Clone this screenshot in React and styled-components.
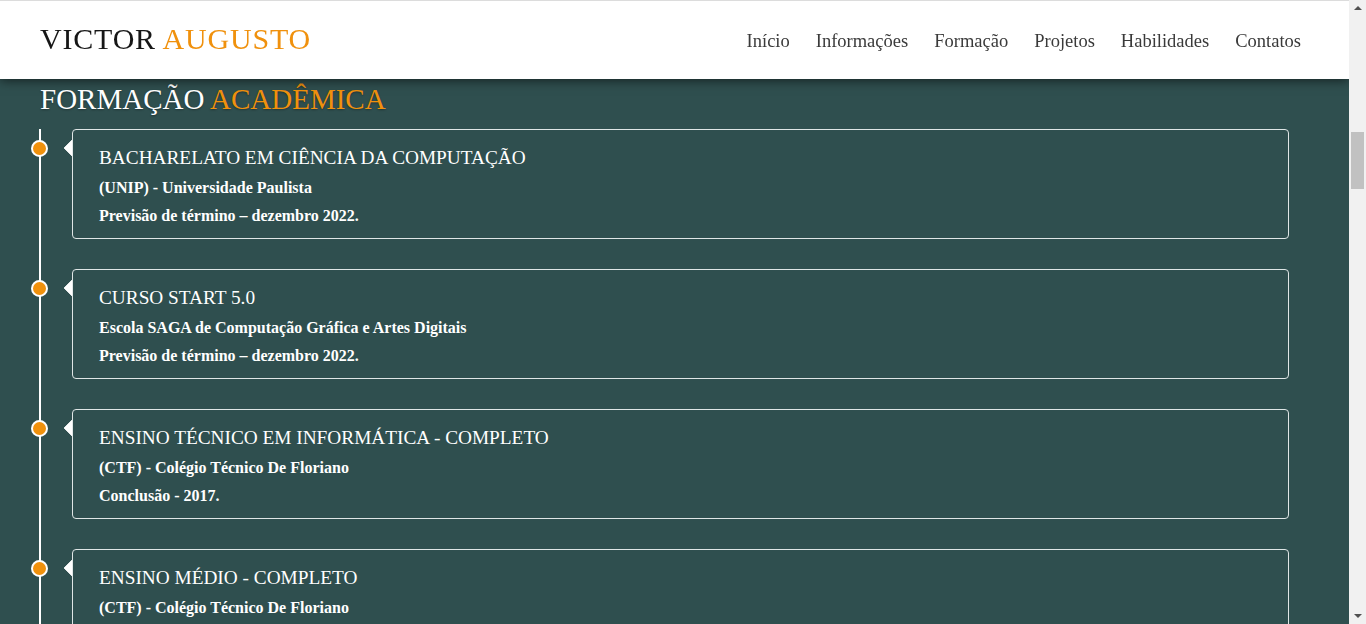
import React from 'react';
import styled, {createGlobalStyle} from 'styled-components';

const GlobalStyle = createGlobalStyle`
    body {
        margin: 0;
        background: #2f4f4f;
        font-family: "Liberation Serif", "Times New Roman", serif;
    }
`

const Header = styled.header`
    position: fixed;
    top: 0;
    left: 0;
    right: 17px;
    height: 78px;
    background: #ffffff;
    border-top: 1px solid #dcdcdc;
    box-shadow: 0 2px 10px rgba(0,0,0,0.55);
    display: flex;
    align-items: center;
    justify-content: space-between;
    padding: 0 48px 0 40px;
    z-index: 10;
`
const Logo = styled.div`
    font-size: 30px;
    letter-spacing: 0.8px;
    color: #161616;
    padding-bottom: 2px;
`
const Accent = styled.span`
    color: #f0910d;
`
const Nav = styled.nav`
    display: flex;
    gap: 26px;
    padding-top: 2px;
`
const NavLink = styled.a`
    font-size: 18.5px;
    color: #3a3a3a;
    text-decoration: none;
    cursor: pointer;
`
const ScrollBar = styled.div`
    position: fixed;
    top: 0;
    right: 0;
    bottom: 0;
    width: 17px;
    background: #f1f1f1;
    z-index: 20;
    display: flex;
    flex-direction: column;
    align-items: center;
`
const Arrow = styled.span`
    width: 0;
    height: 0;
    margin: ${p => p.$down ? 'auto 0 6px' : '6px 0 0'};
    border-left: 4px solid transparent;
    border-right: 4px solid transparent;
    ${p => p.$down ? 'border-top: 4px solid #505050;' : 'border-bottom: 4px solid #505050;'}
`
const Thumb = styled.span`
    width: 13px;
    height: 57px;
    margin-top: 122px;
    background: #c1c1c1;
`
const Main = styled.main`
    padding: 80px 77px 40px 40px;
`
const SectionTitle = styled.h2`
    margin: 3px 0 13px;
    font-size: 29px;
    font-weight: normal;
    line-height: 33px;
    color: #ffffff;
    text-shadow: 0 1px 2px rgba(0,0,0,0.35);
`
const Timeline = styled.div`
    border-left: 2px solid #ffffff;
    margin-left: -1px;
    padding-left: 31px;
`
const Item = styled.div`
    position: relative;
    margin-bottom: 30px;
`
const Dot = styled.span`
    position: absolute;
    left: -41px;
    top: 11px;
    width: 13px;
    height: 13px;
    border-radius: 50%;
    background: #f0910d;
    border: 2px solid #ffffff;
`
const Card = styled.div`
    position: relative;
    border: 1px solid #dfe6e6;
    border-radius: 4px;
    padding: 16px 26px 8px;
    color: #ffffff;
    ::before {
        content: "";
        position: absolute;
        left: -9px;
        top: 10px;
        border-top: 8px solid transparent;
        border-bottom: 8px solid transparent;
        border-right: 8px solid #ffffff;
    }
`
const CardTitle = styled.h3`
    margin: 0 0 4px;
    font-size: 19.3px;
    font-weight: normal;
    line-height: 24px;
`
const CardLine = styled.p`
    margin: 0;
    font-size: 16px;
    font-weight: bold;
    line-height: 28px;
`

const links = ["Início","Informações","Formação","Projetos","Habilidades","Contatos"]

const courses = [
    {title:"BACHARELATO EM CIÊNCIA DA COMPUTAÇÃO", place:"(UNIP) - Universidade Paulista", date:"Previsão de término – dezembro 2022."},
    {title:"CURSO START 5.0", place:"Escola SAGA de Computação Gráfica e Artes Digitais", date:"Previsão de término – dezembro 2022."},
    {title:"ENSINO TÉCNICO EM INFORMÁTICA - COMPLETO", place:"(CTF) - Colégio Técnico De Floriano", date:"Conclusão - 2017."},
    {title:"ENSINO MÉDIO - COMPLETO", place:"(CTF) - Colégio Técnico De Floriano", date:"Conclusão - 2017."}
]

export default function App(){
    return (
        <>
            <GlobalStyle />
            <Header>
                <Logo>VICTOR <Accent>AUGUSTO</Accent></Logo>
                <Nav>
                    {links.map(l => <NavLink key={l}>{l}</NavLink>)}
                </Nav>
            </Header>
            <ScrollBar>
                <Arrow />
                <Thumb />
                <Arrow $down />
            </ScrollBar>
            <Main>
                <SectionTitle>FORMAÇÃO <Accent>ACADÊMICA</Accent></SectionTitle>
                <Timeline>
                    {courses.map(c => (
                        <Item key={c.title}>
                            <Dot />
                            <Card>
                                <CardTitle>{c.title}</CardTitle>
                                <CardLine>{c.place}</CardLine>
                                <CardLine>{c.date}</CardLine>
                            </Card>
                        </Item>
                    ))}
                </Timeline>
            </Main>
        </>
    );
}
